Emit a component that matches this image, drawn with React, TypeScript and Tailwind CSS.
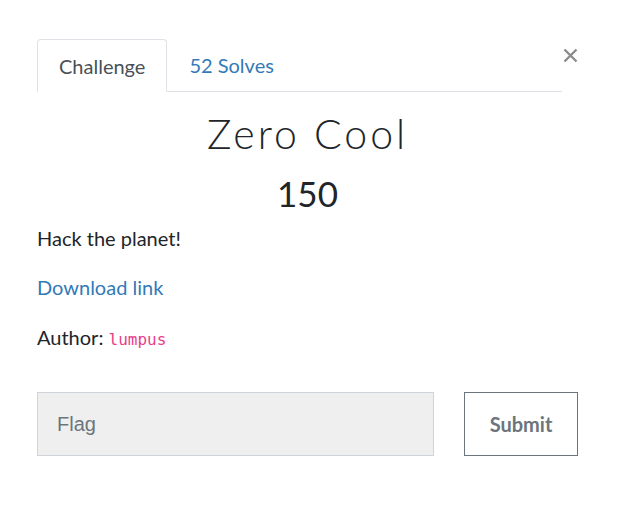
import React from "react";

export default function App() {
  return (
    <div className="w-[618px] h-[514px] bg-white" style={{ fontFamily: "Lato, 'Noto Sans', sans-serif" }}>
      <div className="pt-[39px] pl-[37px] pr-[40px]">
        <div className="flex items-start">
          <div className="flex-1 flex border-b border-[#dee2e6]">
            <div className="h-[53px] -mb-px px-[21px] flex items-center border border-[#dee2e6] border-b-white rounded-t-[4px] text-[20px] text-[#495057] bg-white">
              Challenge
            </div>
            <div className="h-[52px] px-[22px] flex items-center text-[20px] text-[#337ab7]">52 Solves</div>
          </div>
          <div className="w-[16px] pt-[9px] flex justify-end">
            <svg width="15" height="15" viewBox="0 0 15 15">
              <path d="M1.5 1.5 L13.5 13.5 M13.5 1.5 L1.5 13.5" stroke="#8c8c8c" strokeWidth="2.4" />
            </svg>
          </div>
        </div>
        <h1 className="text-center text-[41px] leading-[48px] mt-[18px] font-light text-[#212529] tracking-[3px]" style={{ fontFamily: "Lato, sans-serif" }}>
          Zero Cool
        </h1>
        <h3 className="text-center text-[35px] leading-[40px] mt-[15px] font-normal text-[#212529]">150</h3>
        <p className="mt-[10px] text-[20px] text-[#212529]">Hack the planet!</p>
        <p className="mt-[19px] text-[20px] text-[#337ab7]">Download link</p>
        <p className="mt-[20px] text-[20px] text-[#212529]">
          Author: <code className="text-[16px] text-[#e83e8c]" style={{ fontFamily: "'DejaVu Sans Mono', monospace" }}>lumpus</code>
        </p>
        <div className="mt-[40px] flex">
          <div className="w-[397px] h-[64px] bg-[#efefef] border border-[#ced4da] flex items-center px-[19px] text-[20px] text-[#6c757d]" style={{ fontFamily: "'Liberation Sans', sans-serif" }}>
            Flag
          </div>
          <div className="ml-[30px] w-[114px] h-[64px] border border-[#6c757d] flex items-center justify-center text-[20px] font-bold text-[#6c757d]">
            Submit
          </div>
        </div>
      </div>
    </div>
  );
}
